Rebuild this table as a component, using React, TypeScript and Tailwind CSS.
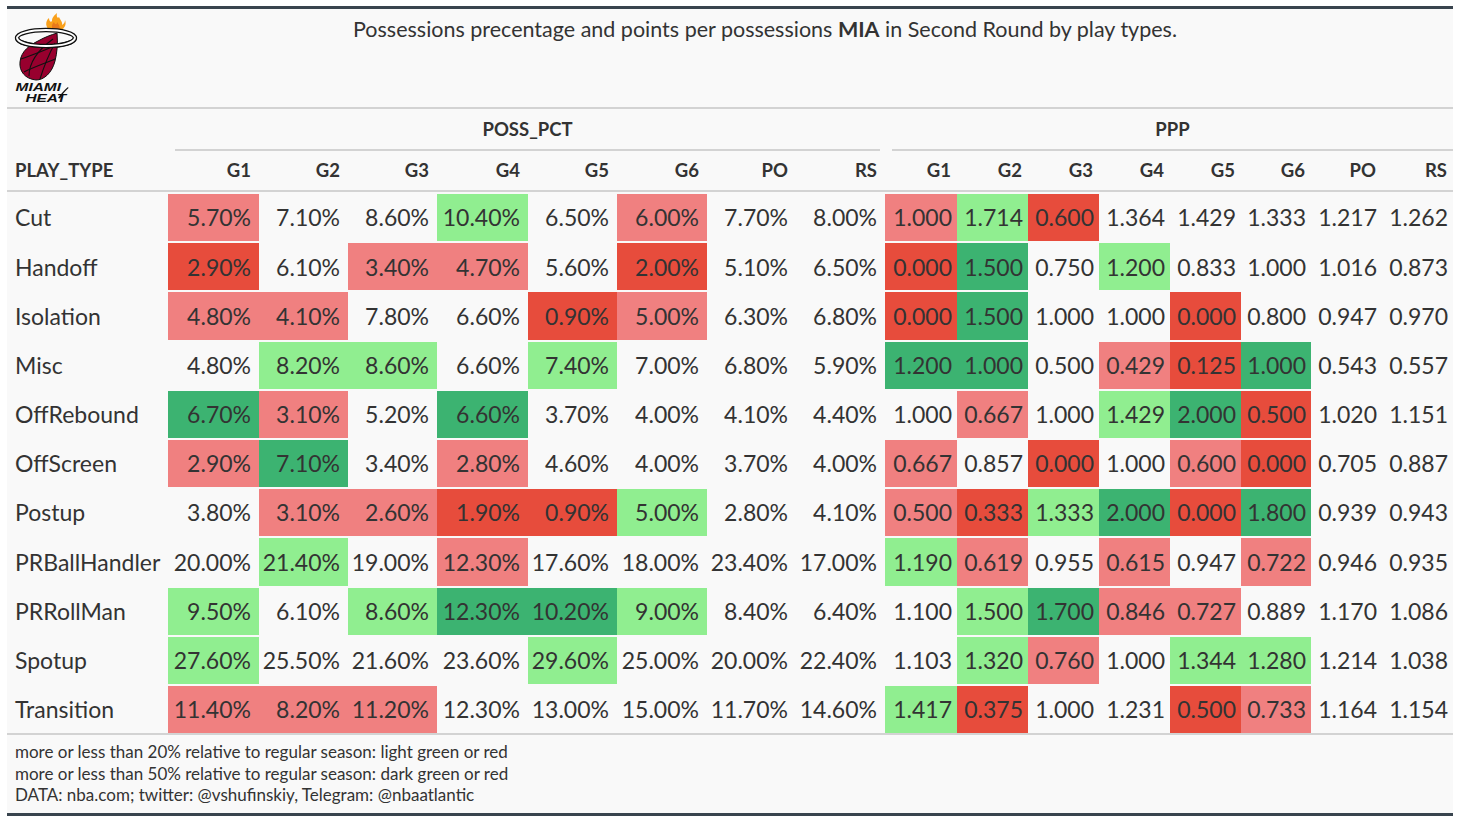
type Tone = "" | "lr" | "dr" | "lg" | "dg";

interface Row {
  name: string;
  poss: [string, Tone][];
  ppp: [string, Tone][];
}

const toneClass: Record<Tone, string> = {
  "": "",
  lr: "bg-[#f08080]",
  dr: "bg-[#e74c3c]",
  lg: "bg-[#90ee90]",
  dg: "bg-[#3cb371]",
};

// each line: value:tone, "-" means no colour
const raw: [string, string, string][] = [
  ["Cut", "5.70%:lr 7.10%:- 8.60%:- 10.40%:lg 6.50%:- 6.00%:lr 7.70%:- 8.00%:-", "1.000:lr 1.714:lg 0.600:dr 1.364:- 1.429:- 1.333:- 1.217:- 1.262:-"],
  ["Handoff", "2.90%:dr 6.10%:- 3.40%:lr 4.70%:lr 5.60%:- 2.00%:dr 5.10%:- 6.50%:-", "0.000:dr 1.500:dg 0.750:- 1.200:lg 0.833:- 1.000:- 1.016:- 0.873:-"],
  ["Isolation", "4.80%:lr 4.10%:lr 7.80%:- 6.60%:- 0.90%:dr 5.00%:lr 6.30%:- 6.80%:-", "0.000:dr 1.500:dg 1.000:- 1.000:- 0.000:dr 0.800:- 0.947:- 0.970:-"],
  ["Misc", "4.80%:- 8.20%:lg 8.60%:lg 6.60%:- 7.40%:lg 7.00%:- 6.80%:- 5.90%:-", "1.200:dg 1.000:dg 0.500:- 0.429:lr 0.125:dr 1.000:dg 0.543:- 0.557:-"],
  ["OffRebound", "6.70%:dg 3.10%:lr 5.20%:- 6.60%:dg 3.70%:- 4.00%:- 4.10%:- 4.40%:-", "1.000:- 0.667:lr 1.000:- 1.429:lg 2.000:dg 0.500:dr 1.020:- 1.151:-"],
  ["OffScreen", "2.90%:lr 7.10%:dg 3.40%:- 2.80%:lr 4.60%:- 4.00%:- 3.70%:- 4.00%:-", "0.667:lr 0.857:- 0.000:dr 1.000:- 0.600:lr 0.000:dr 0.705:- 0.887:-"],
  ["Postup", "3.80%:- 3.10%:lr 2.60%:lr 1.90%:dr 0.90%:dr 5.00%:lg 2.80%:- 4.10%:-", "0.500:lr 0.333:dr 1.333:lg 2.000:dg 0.000:dr 1.800:dg 0.939:- 0.943:-"],
  ["PRBallHandler", "20.00%:- 21.40%:lg 19.00%:- 12.30%:lr 17.60%:- 18.00%:- 23.40%:- 17.00%:-", "1.190:lg 0.619:lr 0.955:- 0.615:lr 0.947:- 0.722:lr 0.946:- 0.935:-"],
  ["PRRollMan", "9.50%:lg 6.10%:- 8.60%:lg 12.30%:dg 10.20%:dg 9.00%:lg 8.40%:- 6.40%:-", "1.100:- 1.500:lg 1.700:dg 0.846:lr 0.727:lr 0.889:- 1.170:- 1.086:-"],
  ["Spotup", "27.60%:lg 25.50%:- 21.60%:- 23.60%:- 29.60%:lg 25.00%:- 20.00%:- 22.40%:-", "1.103:- 1.320:lg 0.760:lr 1.000:- 1.344:lg 1.280:lg 1.214:- 1.038:-"],
  ["Transition", "11.40%:lr 8.20%:lr 11.20%:lr 12.30%:- 13.00%:- 15.00%:- 11.70%:- 14.60%:-", "1.417:lg 0.375:dr 1.000:- 1.231:- 0.500:dr 0.733:lr 1.164:- 1.154:-"],
];

const parse = (s: string): [string, Tone][] =>
  s.split(" ").map((p) => {
    const [v, t] = p.split(":");
    return [v, (t === "-" ? "" : t) as Tone];
  });

const rows: Row[] = raw.map(([name, a, b]) => ({ name, poss: parse(a), ppp: parse(b) }));

const cols = ["G1", "G2", "G3", "G4", "G5", "G6", "PO", "RS"];

const grid =
  "grid grid-cols-[161px_91px_89px_89px_91px_89px_90px_89px_89px_72px_71px_71px_71px_71px_70px_71px_71px]";

function HeatLogo() {
  return (
    <div className="relative w-[70px] h-[92px]">
      <svg width="70" height="92" viewBox="10 12 70 92">
        {/* flame */}
        <path
          d="M51 31 C45 28 45 21 49 18 C49 21 51 23 52 21 C52 17 55 15 57 13 C56 17 58 19 59 17 C60 20 63 22 62 25 C64 24 65 22 65 20 C67 25 64 30 58 31 Z"
          fill="#f9a01b"
        />
        <path d="M53 30 C51 27 52 24 54 22 C55 25 57 25 57 22 C59 25 61 28 59 30 Z" fill="#e8791c" />
        {/* back of hoop */}
        <ellipse cx="46" cy="38" rx="29" ry="8" fill="none" stroke="#111" strokeWidth="4.4" />
        <ellipse cx="46" cy="38" rx="29" ry="8" fill="none" stroke="#fff" strokeWidth="2" />
        {/* ball */}
        <path
          d="M57 33 C58 44 57 53 55 61 C52 73 44 80 36 80 C25 79 19 71 20 62 C21 51 30 45 38 41 C45 37 51 35 57 33 Z"
          fill="#98002e"
          stroke="#111"
          strokeWidth="1"
        />
        <path d="M21 59 C32 55 44 51 56 45" fill="none" stroke="#111" strokeWidth="1.1" />
        <path d="M29 76 C29 62 38 50 53 39" fill="none" stroke="#111" strokeWidth="1.1" />
        <path d="M40 79 C44 66 49 54 55 43" fill="none" stroke="#111" strokeWidth="1.1" />
        <path d="M24 72 C34 67 46 63 55 59" fill="none" stroke="#111" strokeWidth="1.1" />
        {/* front of hoop */}
        <path d="M17 38 C18 43 30 46 46 46 C62 46 74 43 75 38" fill="none" stroke="#111" strokeWidth="4.4" />
        <path d="M17 38 C18 43 30 46 46 46 C62 46 74 43 75 38" fill="none" stroke="#fff" strokeWidth="2" />
        {/* swoosh */}
        <path d="M58 98 C61 94 64 90 68 87 L68.5 88 C65 91 62 95 60 98.5 Z" fill="#111" />
      </svg>
      <div className="absolute left-0 top-[70px] font-['Liberation_Sans',Arial,sans-serif] font-bold italic text-[11px] leading-[11px] text-[#111]">
        <div className="pl-[4px] origin-left scale-x-[1.4]">MIAMI</div>
        <div className="pl-[11px] origin-left scale-x-[1.4]">HEAT</div>
      </div>
    </div>
  );
}

export default function App() {
  return (
    <div className="min-h-screen bg-white pt-[6px] pl-[7px] font-['Lato','Noto_Sans',sans-serif] text-[#333]">
      <div className="w-[1446px] bg-[#f9f9f9] border-t-[3px] border-b-[3px] border-[#39444e]">
        {/* Heading */}
        <div className="flex h-[100px] border-b-2 border-[#d3d3d3]">
          <div className="w-[70px] pl-[3px] pt-[3px]">
            <HeatLogo />
          </div>
          <div className="flex-1 text-center text-[21.5px] leading-[26px] pt-[7px]">
            Possessions precentage and points per possessions <span className="font-bold">MIA</span> in Second
            Round by play types.
          </div>
        </div>

        {/* Spanners */}
        <div className={grid + " text-[18.5px] font-bold leading-[20px]"}>
          <div />
          <div className="col-span-8 pt-[10px] pl-[7px] pr-[5px]">
            <div className="text-center h-[30px]">POSS_PCT</div>
            <div className="h-[2px] bg-[#d3d3d3]" />
          </div>
          <div className="col-span-8 pt-[10px] pl-[7px]">
            <div className="text-center h-[30px]">PPP</div>
            <div className="h-[2px] bg-[#d3d3d3]" />
          </div>
        </div>

        {/* Column labels */}
        <div className={grid + " h-[41px] items-center text-[18.5px] font-bold border-b-2 border-[#d3d3d3]"}>
          <div className="pl-[8px]">PLAY_TYPE</div>
          {cols.map((c) => (
            <div key={"p" + c} className="text-right pr-[8px]">
              {c}
            </div>
          ))}
          {cols.map((c) => (
            <div key={"q" + c} className="text-right pr-[6px]">
              {c}
            </div>
          ))}
        </div>

        {/* Body */}
        <div className="border-b-2 border-[#d3d3d3]">
          {rows.map((r) => (
            <div key={r.name} className={grid + " h-[49.2px] border-t-2 border-[#f9f9f9] text-[23px]"}>
              <div className="flex items-center pl-[8px]">{r.name}</div>
              {r.poss.map(([v, t], i) => (
                <div key={"a" + i} className={"flex items-center justify-end pr-[8px] " + toneClass[t]}>
                  {v}
                </div>
              ))}
              {r.ppp.map(([v, t], i) => (
                <div key={"b" + i} className={"flex items-center justify-end pr-[5px] " + toneClass[t]}>
                  {v}
                </div>
              ))}
            </div>
          ))}
        </div>

        {/* Footnotes */}
        <div className="pl-[8px] pt-[6px] pb-[7px] text-[17px] leading-[21.5px]">
          <div>more or less than 20% relative to regular season: light green or red</div>
          <div>more or less than 50% relative to regular season: dark green or red</div>
          <div>DATA: nba.com; twitter: @vshufinskiy, Telegram: @nbaatlantic</div>
        </div>
      </div>
    </div>
  );
}
